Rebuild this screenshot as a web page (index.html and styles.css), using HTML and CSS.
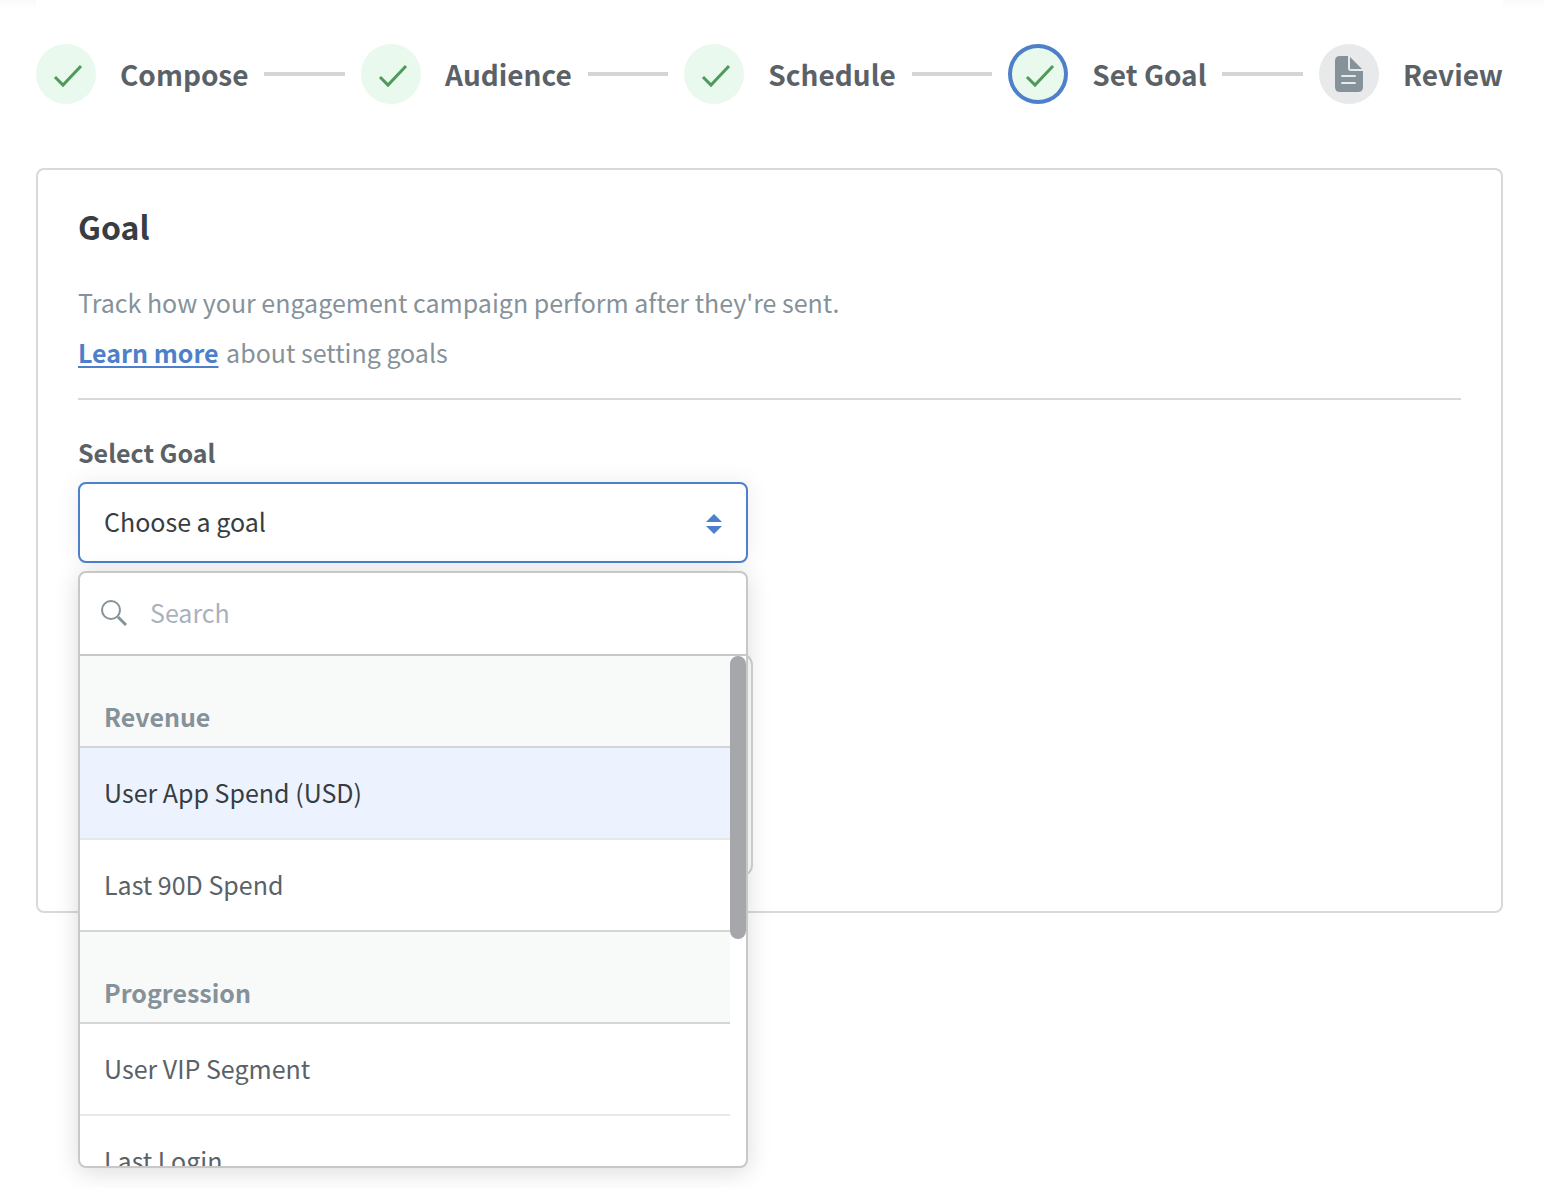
FILE: index.html
```html
<!DOCTYPE html>
<html lang="en">
  <head>
    <meta charset="utf-8" />
    <title>Set Goal</title>
    <link rel="stylesheet" href="styles.css">
  </head>

  <body>
    <div class="page">
      <!-- Steps -->
      <ol class="steps">
        <li class="step">
          <span class="step-icon done">
            <svg width="60" height="60" viewBox="0 0 60 60"><path d="M19 33l8 8 18-19" /></svg>
          </span>
          <span class="step-label">Compose</span>
        </li>
        <li class="step-line"></li>
        <li class="step">
          <span class="step-icon done">
            <svg width="60" height="60" viewBox="0 0 60 60"><path d="M19 33l8 8 18-19" /></svg>
          </span>
          <span class="step-label">Audience</span>
        </li>
        <li class="step-line"></li>
        <li class="step">
          <span class="step-icon done">
            <svg width="60" height="60" viewBox="0 0 60 60"><path d="M19 33l8 8 18-19" /></svg>
          </span>
          <span class="step-label">Schedule</span>
        </li>
        <li class="step-line"></li>
        <li class="step" aria-current="step">
          <span class="step-icon done current">
            <svg width="60" height="60" viewBox="0 0 60 60"><path d="M19 33l8 8 18-19" /></svg>
          </span>
          <span class="step-label">Set Goal</span>
        </li>
        <li class="step-line"></li>
        <li class="step">
          <span class="step-icon todo">
            <svg width="60" height="60" viewBox="0 0 60 60">
              <path class="sheet" d="M21 12h8v12q0 3 3 3h12v16q0 5-5 5H21q-5 0-5-5V17q0-5 5-5z" />
              <path class="sheet" d="M31 13l12 12H31z" />
              <path class="sheet-line" d="M23 32h13M23 39h13" />
            </svg>
          </span>
          <span class="step-label">Review</span>
        </li>
      </ol>

      <!-- Goal card -->
      <main class="card">
        <h1>Goal</h1>
        <div class="intro">
          <p>Track how your engagement campaign perform after they're sent.</p>
          <p><a href="#">Learn more</a> about setting goals</p>
        </div>

        <div class="field">
          <label for="goal">Select Goal</label>
          <div class="select-wrap">
            <select id="goal">
              <option>Choose a goal</option>
            </select>
            <svg class="arrows" width="16" height="20" viewBox="0 0 16 20">
              <path d="M8 0l8 8H0zM0 12h16l-8 8z" />
            </svg>

            <!-- Open menu -->
            <div class="menu">
              <div class="search">
                <svg width="28" height="28" viewBox="0 0 28 28">
                  <circle cx="11" cy="11" r="9" />
                  <path d="M18 18l8 8" />
                </svg>
                <input type="text" placeholder="Search" aria-label="Search">
              </div>
              <div class="menu-body">
                <ul class="options" role="listbox" aria-label="Goals">
                  <li class="group">Revenue</li>
                  <li class="option active" role="option" aria-selected="true">User App Spend (USD)</li>
                  <li class="option last" role="option">Last 90D Spend</li>
                  <li class="group">Progression</li>
                  <li class="option" role="option">User VIP Segment</li>
                  <li class="option" role="option">Last Login</li>
                </ul>
                <div class="scrollbar"><div class="thumb"></div></div>
              </div>
            </div>
          </div>
        </div>

        <div class="panel"></div>
      </main>
    </div>
  </body>
</html>
```
FILE: styles.css
```css
* {
  box-sizing: border-box;
}

body {
  margin: 0;
  font-family: "Noto Sans CJK SC", "Noto Sans", sans-serif;
  font-size: 25px;
  line-height: 36px;
  color: #5a6268;
  background: linear-gradient(#f9f9f9, #fff 8px);
}

ol,
ul {
  margin: 0;
  padding: 0;
  list-style: none;
}

.page {
  margin: 0 41px 0 36px;
  padding: 44px 0 20px;
  min-height: 100vh;
  background: #fff;
}

/* Steps */
.steps {
  display: flex;
  align-items: center;
  gap: 16px;
  margin-bottom: 64px;
}

.step {
  display: flex;
  align-items: center;
  gap: 24px;
}

.step-icon {
  width: 60px;
  height: 60px;
  border-radius: 50%;
}

.step-icon svg {
  display: block;
}

.done {
  background: #e9f9ed;
}

.done path {
  fill: none;
  stroke: #4d9a5a;
  stroke-width: 3;
}

.current {
  box-shadow: inset 0 0 0 4px #4d7fcb;
}

.todo {
  background: #e7e9eb;
}

.sheet {
  fill: #869299;
}

.sheet-line {
  stroke: #e7e9eb;
  stroke-width: 2;
  stroke-linecap: round;
}

.step-label {
  font-size: 28px;
  font-weight: 600;
  white-space: nowrap;
}

.step-line {
  flex: 1;
  height: 4px;
  background: #d5d5d5;
}

/* Card */
.card {
  padding: 38px 40px 34px;
  border: 2px solid #d9d9d9;
  border-radius: 8px;
}

h1 {
  margin: 0 0 33px;
  font-size: 32px;
  font-weight: 600;
  line-height: 36px;
  color: #373d42;
}

.intro {
  padding-bottom: 21px;
  margin-bottom: 34px;
  border-bottom: 2px solid #d9d9d9;
  line-height: 50px;
  color: #869299;
}

.intro p {
  margin: 0;
}

.intro a {
  margin-right: 2px;
  font-weight: 600;
  color: #4d7fcb;
  text-decoration-thickness: 2px;
  text-underline-offset: 3px;
}

.field label {
  display: block;
  margin-bottom: 12px;
  font-weight: 600;
}

/* Select */
.select-wrap {
  position: relative;
  max-width: 670px;
}

select {
  display: block;
  width: 100%;
  height: 81px;
  padding: 0 24px 4px;
  border: 2px solid #4d7fcb;
  border-radius: 8px;
  font: inherit;
  color: #373d42;
  background: #fff;
  box-shadow: 0 0 24px rgba(0, 0, 0, 0.08);
  appearance: none;
  outline: none;
}

.arrows {
  position: absolute;
  top: 32px;
  right: 26px;
  fill: #4d7fcb;
}

.menu {
  position: absolute;
  top: 89px;
  left: 0;
  width: 100%;
  border: 2px solid #c8c8c8;
  border-radius: 8px;
  background: #fff;
  box-shadow: 0 4px 24px rgba(0, 0, 0, 0.14);
  overflow: hidden;
}

.search {
  display: flex;
  align-items: center;
  gap: 22px;
  height: 83px;
  padding: 0 20px 2px;
  border-bottom: 2px solid #c8c8c8;
}

.search svg {
  fill: none;
  stroke: #869299;
  stroke-width: 2;
}

.search path {
  stroke-width: 3;
}

.search input {
  flex: 1;
  padding: 0 0 2px;
  border: none;
  outline: none;
  font: inherit;
  background: none;
}

.search input::placeholder {
  color: #a9b2bc;
}

.menu-body {
  display: flex;
  height: 510px;
}

.options {
  flex: 1;
  overflow: hidden;
}

.group,
.option {
  height: 92px;
  padding: 26px 24px;
  border-bottom: 2px solid #e8e8e8;
}

.group {
  padding-top: 42px;
  padding-bottom: 12px;
  border-color: #d5d5d5;
  font-weight: 600;
  color: #869299;
  background: #f8faf9;
}

.last {
  border-color: #d5d5d5;
}

.active {
  color: #373d42;
  background: #ecf3fe;
}

.scrollbar {
  width: 16px;
}

.thumb {
  height: 283px;
  border-radius: 8px;
  background: #a6a7ab;
}

/* Panel behind the menu */
.panel {
  max-width: 675px;
  height: 224px;
  margin-top: 90px;
  border: 2px solid #d5d5d5;
  border-radius: 12px;
}
```
